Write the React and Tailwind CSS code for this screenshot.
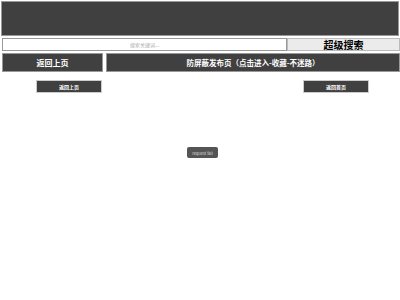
export default function App() {
  const font = { fontFamily: '"Noto Sans CJK SC", "Liberation Sans", sans-serif' };
  return (
    <div className="w-[400px] h-[300px] bg-white relative overflow-hidden" style={font}>
      {/* header */}
      <div className="mx-[1px] mt-[1px] h-[35px] bg-[#404040] border border-[#999]" />

      {/* search */}
      <div className="flex mt-[2px] pl-[2px] h-[13px]">
        <div className="flex-1 border border-[#999] bg-white flex items-center justify-center text-[5px] text-[#aaa] leading-none">
          搜索关键词...
        </div>
        <div className="w-[113px] bg-[#ebebeb] border border-[#bbb] flex items-center justify-center text-[10px] font-bold text-black leading-none">
          超级搜索
        </div>
      </div>

      {/* nav */}
      <div className="flex gap-[3px] mt-[2px] pl-[2px] h-[19px]">
        <div className="w-[101px] bg-[#404040] border border-[#999] flex items-center justify-center text-[8px] font-bold text-white leading-none">
          返回上页
        </div>
        <div className="flex-1 bg-[#404040] border border-[#999] flex items-center justify-center text-[7.5px] font-bold text-white leading-none">
          防屏蔽发布页（点击进入-收藏-不迷路）
        </div>
      </div>

      {/* small buttons */}
      <div className="flex justify-between mt-[8px] pl-[36px] pr-[31px]">
        <div className="w-[66px] h-[13px] bg-[#404040] border border-[#ccc] flex items-center justify-center text-[5px] font-bold text-white leading-none">
          返回上页
        </div>
        <div className="w-[66px] h-[13px] bg-[#404040] border border-[#ccc] flex items-center justify-center text-[5px] font-bold text-white leading-none">
          返回首页
        </div>
      </div>

      {/* toast */}
      <div className="absolute left-[187px] top-[147px] w-[31px] h-[11px] rounded-[2px] bg-[#555] flex items-center justify-center text-[4px] text-[#ddd] leading-none">
        request fail
      </div>
    </div>
  );
}
